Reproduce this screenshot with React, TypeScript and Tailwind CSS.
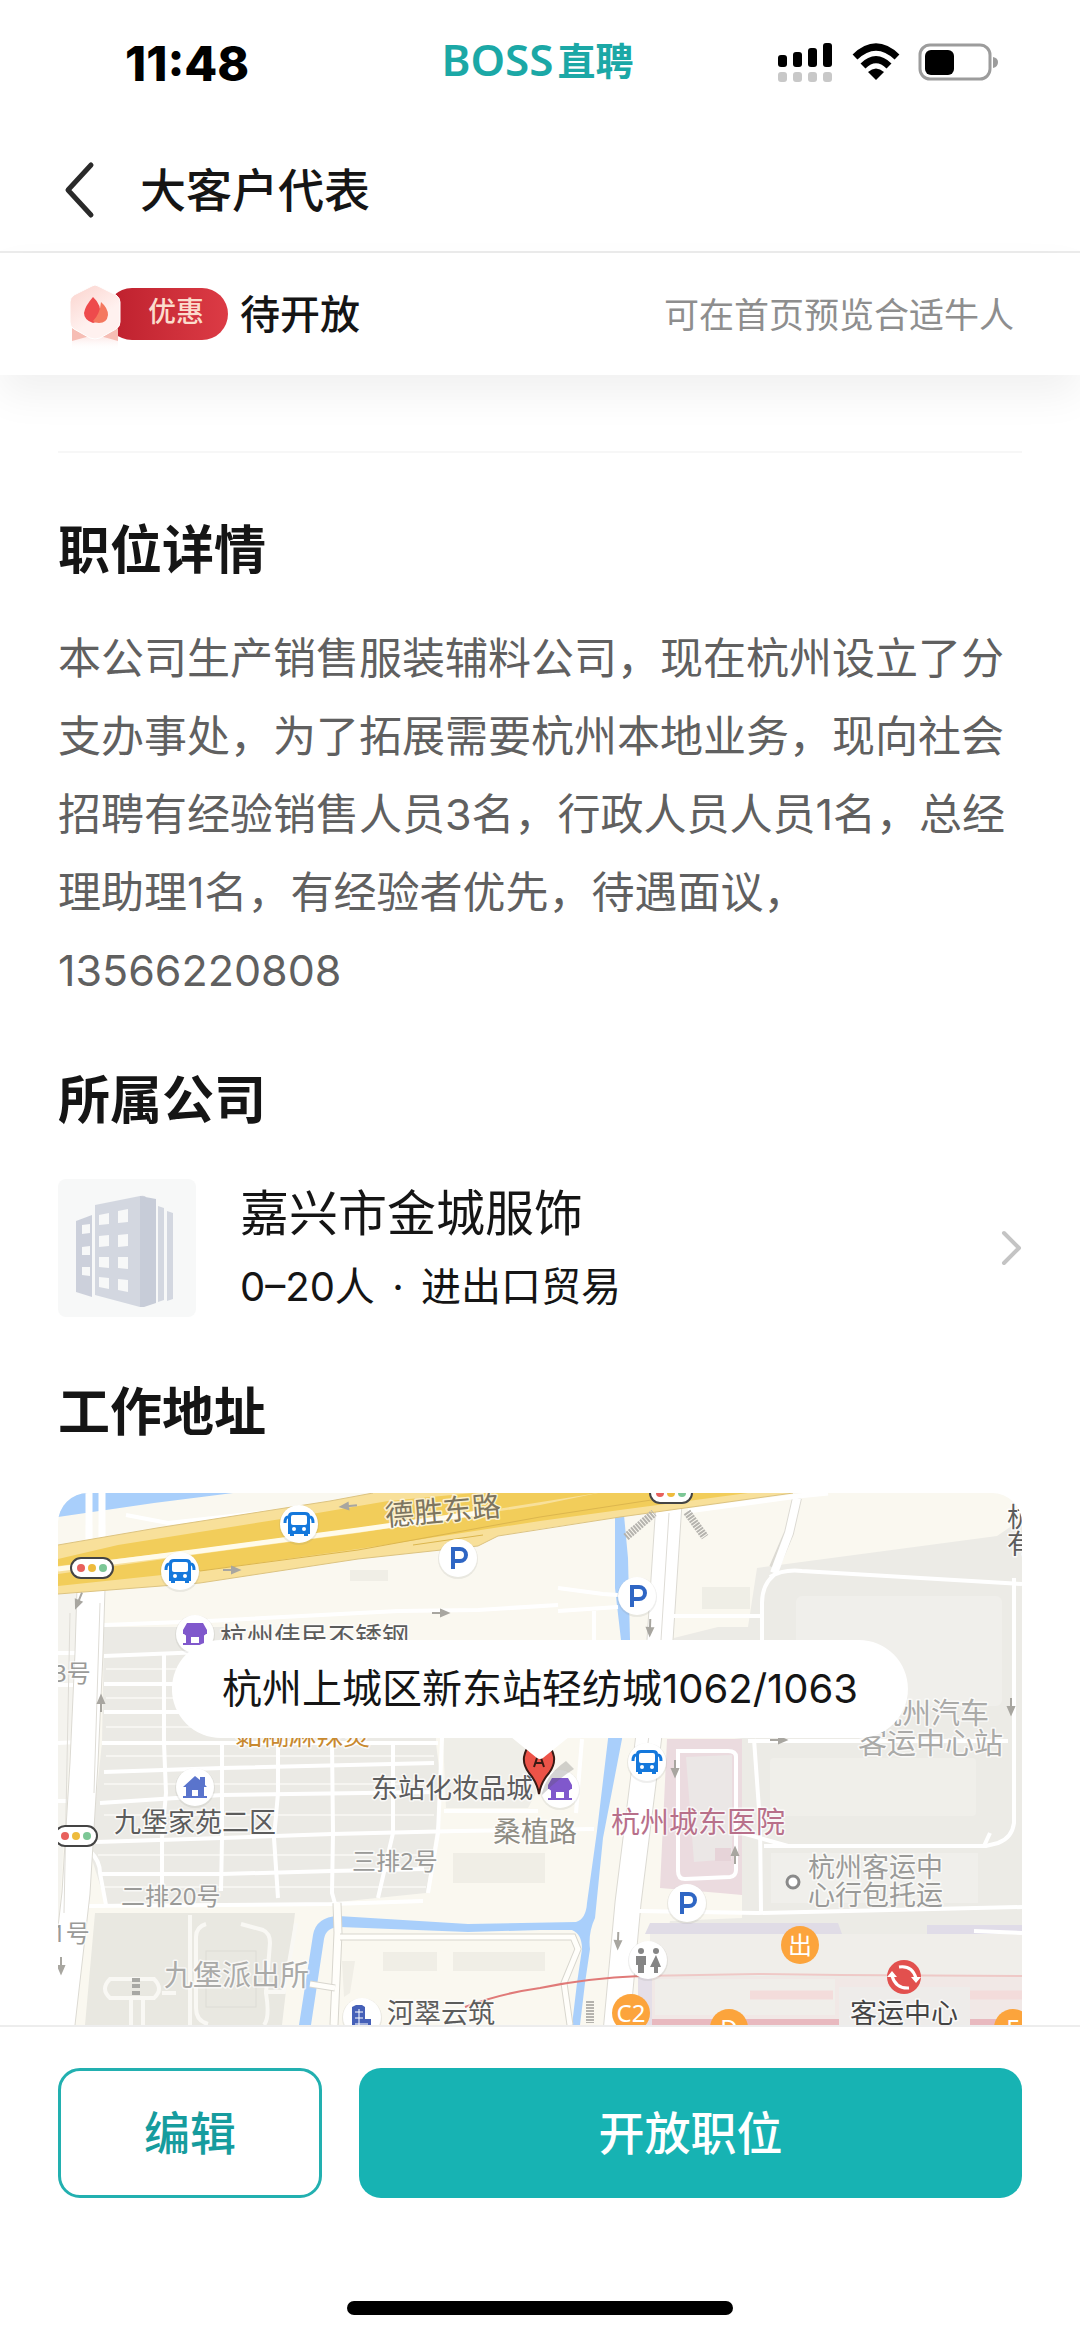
import type { ReactNode } from "react";

const LABEL = "fill-[#5c5c5c]";
const MUTED = "fill-[#9a9a98]";
const FAINT = "fill-[#aaaaa8]";

const mapLabels = [
  { text: "杭州伟民不锈钢", x: 162, y: 154, size: 27, color: LABEL },
  { text: "黏糊麻辣烫", x: 177, y: 252, size: 27, color: "fill-[#c8892f]" },
  { text: "3号", x: -5, y: 189, size: 24, color: MUTED },
  { text: "1号", x: -6, y: 449, size: 24, color: MUTED },
  { text: "九堡家苑二区", x: 56, y: 339, size: 27, color: LABEL },
  { text: "二排20号", x: 63, y: 412, size: 24, color: MUTED },
  { text: "三排2号", x: 294, y: 377, size: 24, color: MUTED },
  { text: "桑植路", x: 435, y: 349, size: 28, color: "fill-[#8f8d84]" },
  { text: "东站化妆品城", x: 313, y: 305, size: 27, color: LABEL },
  { text: "九堡派出所", x: 106, y: 493, size: 29, color: FAINT },
  { text: "河翠云筑", x: 329, y: 530, size: 27, color: LABEL },
  { text: "杭州城东医院", x: 553, y: 340, size: 29, color: "fill-[#b8708a]" },
  { text: "杭州汽车", x: 815, y: 231, size: 29, color: FAINT },
  { text: "客运中心站", x: 800, y: 261, size: 29, color: FAINT },
  { text: "杭州客运中", x: 750, y: 384, size: 27, color: MUTED },
  { text: "心行包托运", x: 750, y: 412, size: 27, color: MUTED },
  { text: "杭", x: 949, y: 34, size: 27, color: LABEL },
  { text: "有", x: 949, y: 61, size: 27, color: LABEL },
  { text: "客运中心", x: 792, y: 530, size: 27, color: "fill-[#444]" },
];

const arrows = [
  { x: 291, y: 13, r: 174 },
  { x: 173, y: 77, r: 0 },
  { x: 21, y: 107, r: 112 },
  { x: 382, y: 120, r: 0 },
  { x: 43, y: 211, r: -90 },
  { x: 592, y: 134, r: 92 },
  { x: 953, y: 213, r: 90 },
  { x: 720, y: 247, r: 0 },
  { x: 617, y: 275, r: 90 },
  { x: 677, y: 363, r: -90 },
  { x: 560, y: 447, r: 92 },
  { x: 3, y: 472, r: 90 },
];

const Disc = ({ x, y, children }: { x: number; y: number; children: ReactNode }) => (
  <g transform={`translate(${x} ${y})`}>
    <circle cy="1" r="20" fill="#8a8a80" opacity="0.14" />
    <circle r="19" fill="#fff" />
    {children}
  </g>
);

const Bus = ({ x, y }: { x: number; y: number }) => (
  <Disc x={x} y={y}>
    <path
      d="M-11-8Q-11-12-6-12H6Q11-12 11-8V10H9V12H5V10H-5V12H-9V10H-11Z"
      fill="#1478dc"
    />
    <path d="M-11-7Q-14-7-14-1M11-7Q14-7 14-1" stroke="#1478dc" strokeWidth="3" fill="none" />
    <rect x="-8" y="-9" width="16" height="10" rx="2" fill="#fff" />
    <circle cx="-5" cy="5" r="2" fill="#fff" />
    <circle cx="5" cy="5" r="2" fill="#fff" />
  </Disc>
);

const Parking = ({ x, y }: { x: number; y: number }) => (
  <Disc x={x} y={y}>
    <path d="M-5 11V-9H2a6 6 0 0 1 0 12H-5" fill="none" stroke="#2f66c4" strokeWidth="4" />
  </Disc>
);

const Shop = ({ x, y }: { x: number; y: number }) => (
  <Disc x={x} y={y}>
    <path
      d="M-8-11H8L12-4V0H9V9H12V11H-12V9H-9V0H-12V-4ZM-4 3V9H4V3Z"
      fill="#8058cc"
      fillRule="evenodd"
    />
    <path d="M-11 0q3 3 6 0q3 3 5 0q3 3 5 0q3 3 6 0" fill="#8058cc" />
  </Disc>
);

const TrafficLight = ({ x, y }: { x: number; y: number }) => (
  <g transform={`translate(${x} ${y})`}>
    <rect x="-21" y="-10" width="42" height="20" rx="10" fill="#fff" stroke="#444" strokeWidth="2" />
    <circle cx="-11" r="4" fill="#e8605c" />
    <circle r="4" fill="#eebb3c" />
    <circle cx="11" r="4" fill="#7cc796" />
  </g>
);

const Exit = ({ x, y, name }: { x: number; y: number; name: string }) => (
  <g transform={`translate(${x} ${y})`}>
    <circle r="19" fill="#fca43c" />
    <text y="9" textAnchor="middle" fontSize="24" fill="#fff">
      {name}
    </text>
  </g>
);

const AreaMap = () => (
  <svg
    viewBox="0 0 964 532"
    preserveAspectRatio="xMidYMin slice"
    className="block h-full w-full font-['Noto_Sans','Noto_Sans_CJK_SC',sans-serif]"
    role="img"
    aria-label="工作地址地图"
  >
    <rect width="964" height="532" fill="#faf8f0" />
    <path d="M0 0H175L96 10L0 24Z" fill="#a9cffb" />
    <path d="M0 101H26L12 250L0 440Z" fill="#f4f3ee" />

    {/* station side */}
    <path d="M699 75L939 43L964 26V532H590L612 428L684 425V246L600 235L616 145L660 134H690Z" fill="#ecebe6" />
    <rect x="644" y="94" width="48" height="22" fill="#efeee6" />
    <rect x="738" y="103" width="206" height="110" rx="6" fill="#f0efeb" />
    <rect x="712" y="265" width="206" height="58" rx="4" fill="#f0efea" />
    <rect x="713" y="360" width="207" height="50" fill="#f0efeb" />
    <path d="M587 441L592 430H780L784 441Z" fill="#e0dce6" />
    <rect x="869" y="432" width="95" height="9" fill="#e0dce8" />
    <rect x="592" y="441" width="372" height="42" fill="#f0eeea" />
    <rect x="585" y="484" width="379" height="48" fill="#f1e8e6" />
    <rect x="597" y="486" width="180" height="36" fill="#f0eeea" />
    <rect x="580" y="484" width="14" height="48" fill="#e5dfe8" />
    <rect x="594" y="526" width="370" height="8" fill="#e8b9bf" />
    <rect x="781" y="494" width="131" height="38" fill="#eeecea" />
    <path d="M692 502H775M912 502H964" stroke="#f3dcdb" strokeWidth="9" />
    <path d="M582 483L700 481L782 482L964 483" stroke="#efc8c6" strokeWidth="2" fill="none" />

    {/* hospital */}
    <path d="M609 246H684V402L662 400L602 395Z" fill="#ebdbdf" />
    <path d="M628 264L674 262V366L636 369Z" fill="#ebe7e6" />
    <rect x="657" y="355" width="16" height="13" fill="#e6d3d8" />
    <path d="M620 258V378Q620 386 627 386L672 384Q678 383 678 377V264Q678 258 670 258Z" fill="none" stroke="#fff" strokeWidth="4" />

    {/* residential blocks */}
    <path d="M46 134H170V147H380L378 250L384 300L368 400L270 410L48 411L32 360L44 250Z" fill="#ebeae5" />
    <path d="M385 245L480 245L478 300L470 315H388Z" fill="#efeee8" />
    <g fill="none" stroke="#f6f5f1" strokeWidth="2">
      <path d="M48 176H376M48 205H376M48 234H376M48 263H376M46 291H376M46 322H376M40 362H372M46 394H368" />
    </g>
    <g fill="none" stroke="#fff" strokeWidth="4">
      <path d="M46 132L150 128L340 118L420 117L500 112" />
      <path d="M46 163L170 158M46 191H378M46 219H378M44 250H380" />
      <path d="M0 160H30M0 192H20M0 250L20 249M0 308H18" />
      <path d="M46 279L164 275L376 270M42 310L164 302L380 299M38 349L164 345L274 341L400 338L536 336" />
      <path d="M44 381H164L274 378L366 376M30 413L164 412L274 411L365 408" />
      <path d="M106 160V250L108 300L104 345V400M164 250V345L163 398M220 250V300L216 345L220 405M274 250L275 340L274 400L281 425" />
      <path d="M335 250V340L320 405M384 245L380 340L370 400M386 318H480M32 358Q42 368 42 380L48 412" />
    </g>
    <path d="M37 420H237L224 532H27Z" fill="#e9e8e1" />
    <rect x="148" y="458" width="50" height="56" fill="none" stroke="#dddcd6" />
    <g fill="none" stroke="#f9f8f4" strokeWidth="4">
      <path d="M148 431Q138 434 138 444V515Q138 528 150 531M183 431L205 437Q212 440 212 450L208 500Q212 525 206 532M206 499H226L238 430" />
      <path d="M52 486H96Q106 496 96 505H52Q42 496 52 486ZM73 505V532M85 505V532M104 500H118M132 422V532" />
    </g>
    <path d="M74 487H82M74 493H82M74 500H82" stroke="#a8a8a4" strokeWidth="4" />
    <g fill="#f0eee6">
      <rect x="395" y="360" width="92" height="30" />
      <rect x="325" y="459" width="54" height="19" />
      <rect x="395" y="459" width="92" height="19" />
      <path d="M284 468H297L292 500L286 504Z" />
      <rect x="292" y="77" width="38" height="11" />
    </g>

    {/* river */}
    <path
      d="M557 22L566 22L570 65L572 147L564 246L545 345L537 425Q530 440 532 456L527 490L522 532H514L519 490L524 456Q524 441 514 437H482L410 439L282 434Q268 434 266 446L253 532H241L255 442Q258 424 280 423L410 431L518 429Q528 426 529 410L539 338L550 246L563 147L557 95Z"
      fill="#a9cffb"
    />
    <path d="M279 410L280 440L276 532" fill="none" stroke="#d8d6ce" strokeWidth="9" />
    <path d="M279 410L280 440L276 532" fill="none" stroke="#fffefa" strokeWidth="7" />
    <path d="M282 444H515L520 456L506 490L512 532M252 491L277 495" fill="none" stroke="#d8d6ce" strokeWidth="7" />
    <path d="M282 444H515L520 456L506 490L512 532M252 491L277 495" fill="none" stroke="#fffefa" strokeWidth="5" />

    {/* white roads */}
    <g fill="none" stroke="#dcdad3">
      <path d="M611 10L602 147L590 250L570 410L558 540" strokeWidth="27" />
      <path d="M33 95L31 160L26 270L18 400L2 540" strokeWidth="29" />
      <path d="M739 5L731 40L716 75" strokeWidth="10" />
    </g>
    <g fill="none" stroke="#fff">
      <path d="M611 10L602 147L590 250L570 410L558 540" strokeWidth="25" />
      <path d="M33 95L31 160L26 270L18 400L2 540" strokeWidth="27" />
      <path d="M739 5L731 40L716 80" strokeWidth="8" />
      <path d="M31 0V62M44 0V60" strokeWidth="7" />
      <path d="M630 18L740 3L770 0" strokeWidth="5" />
    </g>
    <path d="M611 20L603 147L590 250M42 110L36 300M12 120L6 420" fill="none" stroke="#dedcd6" />
    <g fill="none" stroke="#fff" strokeWidth="4">
      <path d="M712 84Q725 76 744 78L964 91M716 82Q704 92 704 110V147M956 85V330Q954 345 940 350L928 353H730L684 340" />
      <path d="M614 123H704M500 95L545 101L560 102M500 118L560 114M536 118V147M696 246L702 330L703 418" />
      <path d="M690 248H950M706 353H926L932 340M580 418L700 420L964 414M916 438L964 440" />
      <path d="M524 246L518 320M68 22L110 30L200 20L300 10" />
    </g>

    {/* expressway */}
    <path d="M0 52L99 35L272 8L315 0H735L562 24L482 36L440 43L420 53L300 66L142 90L0 101Z" fill="#f8e09a" />
    <path d="M0 52L99 35L272 8L315 0M0 101L142 90L300 66L420 53L440 43L562 24L735 0" fill="none" stroke="#dcc381" />
    <path d="M0 66L60 52L242 23L330 8L415 0H540L420 19L300 35L142 56L0 73Z" fill="#f2cd5a" />
    <path d="M0 81L142 61L300 40L482 12L540 0H690L562 17L482 28L300 56L142 78L0 93Z" fill="#f2cd5a" />
    <path d="M0 76L142 58L300 37L420 20" fill="none" stroke="#fffbea" strokeWidth="5" />
    <path d="M142 78L300 57L482 24L600 6M355 52L425 42" fill="none" stroke="#dcb64e" />

    <path d="M568 44L596 20M629 19L647 44" fill="none" stroke="#b5b3ae" strokeWidth="8" strokeDasharray="2 1" />
    <path d="M532 508V530" stroke="#b5b3ae" strokeWidth="8" strokeDasharray="2 1" />
    <path d="M407 514Q440 501 482 495Q530 485 582 483" fill="none" stroke="#e07a78" strokeWidth="2" />

    {arrows.map(({ x, y, r }) => (
      <path
        key={`${x}-${y}`}
        transform={`translate(${x} ${y}) rotate(${r})`}
        d="M-8 0H2M1-3L8 0L1 3Z"
        stroke="#a8a6a0"
        strokeWidth="2"
        fill="#a8a6a0"
      />
    ))}

    <g stroke="#fff" strokeWidth="3" paintOrder="stroke" strokeLinejoin="round" strokeOpacity="0.7">
      <text transform="translate(328 33) rotate(-5)" fontSize="29" className="fill-[#7d755f]">
        德胜东路
      </text>
      {mapLabels.map(({ text, x, y, size, color }) => (
        <text key={text} x={x} y={y} fontSize={size} className={color}>
          {text}
        </text>
      ))}
    </g>
    <circle cx="735" cy="389" r="6" fill="#fff" stroke="#8a8a8a" strokeWidth="3" />

    <Bus x={241} y={31} />
    <Bus x={122} y={78} />
    <Bus x={589} y={269} />
    <Parking x={400} y={65} />
    <Parking x={579} y={103} />
    <Parking x={629} y={410} />
    <Shop x={137} y={141} />
    <Disc x={137} y={294}>
      <path d="M-12 0L0-11L5-7V-10H10V-2L12 0H9V9H12V11H-12V9H-9V0ZM-3 3V9H3V3Z" fill="#5a74cc" fillRule="evenodd" />
    </Disc>
    <Disc x={304} y={524}>
      <path d="M-10 12V-10L-6-12H0L3-10V2H9V12Z" fill="#4560b8" />
      <path d="M-7-5H1M-7 1H1M-7 7H6M-3-8V12" stroke="#fff" strokeWidth="1" />
    </Disc>
    <Disc x={590} y={467}>
      <g fill="#858585">
        <circle cx="-7" cy="-9" r="3" />
        <path d="M-12-4H-2V5H-4V13H-10V5H-12Z" />
        <circle cx="8" cy="-9" r="3" />
        <path d="M8-5L13 7H10V13H6V7H2Z" />
      </g>
    </Disc>
    <TrafficLight x={34} y={75} />
    <TrafficLight x={613} y={0} />
    <TrafficLight x={18} y={343} />
    <Exit x={742} y={452} name="出" />
    <Exit x={573} y={520} name="C2" />
    <Exit x={671} y={535} name="D" />
    <Exit x={955} y={535} name="E" />
    <g transform="translate(846 484)">
      <circle r="17" fill="#e2504e" />
      <path d="M-5-10Q8-12 12 1M5 11Q-8 12-12-1" fill="none" stroke="#fff" strokeWidth="3" />
      <path d="M7 0H17L12 6ZM-7 0H-17L-12-6Z" fill="#fff" />
    </g>
    <Shop x={502} y={296} />
    <path d="M484 300Q488 282 508 268L516 276Q500 286 484 302Z" fill="#555" opacity="0.25" />
    <path
      d="M481 301Q479 289 471 280Q465 272 466 264Q469 249 481 249Q493 249 496 264Q497 272 491 280Q483 289 481 301Z"
      fill="#ec5348"
      stroke="#3a1a14"
      strokeWidth="2"
    />
    <path d="M476 274L480 262H482L486 274M477 270H485" stroke="#3a1a14" strokeWidth="2" fill="none" />
  </svg>
);

const StatusBar = () => (
  <div className="grid h-[126px] grid-cols-[1fr_auto_1fr] items-center pl-[125px] pr-[82px]">
    <span className="pt-0.5 text-[48px] font-extrabold leading-none text-black">11:48</span>
    <div className="-ml-12 flex items-center gap-1 pb-2 font-['Noto_Sans_CJK_SC',sans-serif] font-bold leading-none text-[#1ba8a6]">
      <span className="font-['Noto_Sans','Noto_Sans_CJK_SC',sans-serif] text-[44px] font-semibold">BOSS</span>
      <span className="text-[38px]">直聘</span>
    </div>
    <svg viewBox="0 0 222 42" className="h-[42px] w-[222px] justify-self-end">
      <rect x="2" y="13" width="9" height="12" rx="3" />
      <rect x="17" y="10" width="9" height="15" rx="3" />
      <rect x="32" y="6" width="9" height="19" rx="3" />
      <rect x="47" y="1" width="9" height="24" rx="3" />
      <g fill="#c8c8c8">
        <rect x="2" y="30" width="9" height="10" rx="3" />
        <rect x="17" y="30" width="9" height="10" rx="3" />
        <rect x="32" y="30" width="9" height="10" rx="3" />
        <rect x="47" y="30" width="9" height="10" rx="3" />
      </g>
      <g transform="translate(100 0)" fill="none" stroke="#000" strokeWidth="7">
        <path d="M-21 15Q0-5 21 15" />
        <path d="M-13 24Q0 11 13 24" />
        <path d="M0 38L-8 30Q0 23 8 30Z" fill="#000" stroke="none" />
      </g>
      <rect x="144" y="3" width="70" height="34" rx="10" fill="none" stroke="#9c9c9c" strokeWidth="3" />
      <rect x="149" y="8" width="29" height="25" rx="6" />
      <path d="M217 15Q222 16 222 20Q222 25 217 26Z" fill="#9c9c9c" />
    </svg>
  </div>
);

const DiscountBadge = () => (
  <div className="flex items-start pt-1.5">
    <svg viewBox="0 0 60 66" className="relative h-[66px] w-[60px]">
      <defs>
        <linearGradient id="medal" x1="0" y1="0" x2="0.6" y2="1">
          <stop offset="0" stopColor="#fbd3cd" />
          <stop offset="0.7" stopColor="#fff1ef" />
        </linearGradient>
        <linearGradient id="ribbonGlow" x1="0" y1="0" x2="0" y2="1">
          <stop offset="0" stopColor="#fbd9d6" />
          <stop offset="1" stopColor="#fff" stopOpacity="0" />
        </linearGradient>
      </defs>
      <rect x="6" y="48" width="46" height="17" fill="url(#ribbonGlow)" />
      <path d="M6 43L24 51L6 56ZM52 43L34 51L52 56Z" fill="#f6bdb4" />
      <path
        d="M26 1Q29-1 32 1L50 10Q54 13 54 17V37Q54 42 50 44L34 53Q29 55 24 53L8 44Q4 42 4 37V17Q4 13 8 10Z"
        fill="url(#medal)"
        stroke="#fff"
      />
      <path d="M27 12Q36 20 34 31Q32 37 27 38Q18 35 18 28Q19 21 27 12Z" fill="#ee4a4c" />
      <path d="M35 17Q42 23 42 30Q41 38 33 38Q29 38 27 36Q34 29 35 17Z" fill="#f4785f" />
    </svg>
    <span className="-ml-5 mt-[3px] flex h-[52px] w-[122px] items-center justify-end rounded-full bg-linear-to-r from-[#bd1f2d] to-[#dc3b45] pb-1 pr-6 text-[28px] font-medium text-[#fbdccc]">
      优惠
    </span>
  </div>
);

const CompanyTile = () => (
  <svg viewBox="0 0 138 138" className="size-[138px] shrink-0 rounded-lg bg-[#f7f8f8]">
    <path d="M18 42L34 36V118L18 113Z" fill="#ccd0db" />
    <path d="M37 26L82 17Q88 16 88 19V126L82 128L37 116Z" fill="#d3d7e0" />
    <path d="M82 17L98 20V124L86 128H82Z" fill="#c7ccd8" />
    <path d="M100 27L106 29V121L100 123ZM109 32L115 34V120L109 122Z" fill="#d3d7e0" />
    <g fill="#f7f8f8">
      <path d="M24 46L32 45V54L24 55ZM24 68L32 67V76L24 76ZM24 88H32V97L24 96Z" />
      <path d="M41 36L51 34V45L41 46ZM41 57L51 56V67L41 68ZM41 78H51V89L41 88ZM41 98L51 99V110L41 108Z" />
      <path d="M60 32L70 30V43L60 44ZM60 56L70 55V67L60 68ZM60 78H70V90L60 89ZM60 100L70 101V113L60 111Z" />
    </g>
  </svg>
);

const SectionTitle = ({ className, children }: { className: string; children: ReactNode }) => (
  <h2 className={`text-[52px] font-bold leading-[72px] text-[#151515] ${className}`}>{children}</h2>
);

const App = () => {
  return (
    <div className="flex min-h-screen w-full flex-col bg-white font-['Inter','Noto_Sans_CJK_SC',sans-serif] text-[#151515]">
      <StatusBar />

      <header className="flex h-[127px] items-center gap-11 border-b-2 border-[#ececec] pl-[62px] pt-0.5">
        <button type="button" aria-label="返回">
          <svg viewBox="0 0 34 58" className="h-[58px] w-[34px]" fill="none" stroke="#2a2a2a" strokeWidth="5" strokeLinecap="round" strokeLinejoin="round">
            <path d="M29 4L6 29L29 54" />
          </svg>
        </button>
        <h1 className="text-[46px] font-medium leading-none">大客户代表</h1>
      </header>

      <div className="flex h-[122px] items-center justify-between bg-white px-[66px] pt-0.5 shadow-[0_20px_40px_rgba(0,0,0,0.06)]">
        <div className="flex items-center gap-3">
          <DiscountBadge />
          <span className="text-[40px] font-medium leading-none">待开放</span>
        </div>
        <span className="text-[35px] leading-none text-[#8e8e8e]">可在首页预览合适牛人</span>
      </div>

      <main className="px-[58px]">
        <hr className="mt-[76px] border-t-2 border-[#f7f7f7]" />

        <SectionTitle className="mt-[62px]">职位详情</SectionTitle>
        <p className="mt-8 text-[43px] leading-[78px] text-[#606060]">
          本公司生产销售服装辅料公司，现在杭州设立了分支办事处，为了拓展需要杭州本地业务，现向社会招聘有经验销售人员3名，行政人员人员1名，总经理助理1名，有经验者优先，待遇面议，13566220808
        </p>

        <SectionTitle className="mt-14">所属公司</SectionTitle>
        <a href="#company" className="mt-[42px] flex items-center gap-11">
          <CompanyTile />
          <div className="flex flex-1 flex-col gap-3 pt-1">
            <div className="text-[49px] leading-[62px]">嘉兴市金城服饰</div>
            <div className="text-[40px] leading-[60px]">
              0–20人 <span className="mx-1.5">·</span> 进出口贸易
            </div>
          </div>
          <svg viewBox="0 0 22 36" className="h-9 w-[22px]" fill="none" stroke="#c4c4c4" strokeWidth="4" strokeLinecap="round" strokeLinejoin="round">
            <path d="M4 3L19 18L4 33" />
          </svg>
        </a>

        <SectionTitle className="mt-15">工作地址</SectionTitle>
        <div className="relative mt-11 h-[532px] overflow-hidden rounded-t-[30px]">
          <AreaMap />
          <div className="absolute left-1/2 top-[147px] -translate-x-1/2">
            <div className="flex h-[98px] items-center whitespace-nowrap rounded-full bg-white px-[50px] text-[40px]">
              杭州上城区新东站轻纺城1062/1063
            </div>
            <svg viewBox="0 0 58 24" className="mx-auto -mt-px h-6 w-[58px]" fill="#fff">
              <path d="M0 0H58L32 21Q29 23 26 21Z" />
            </svg>
          </div>
        </div>
      </main>

      <footer className="border-t-2 border-[#ededed] bg-white">
        <div className="flex gap-[37px] px-[58px] pt-[41px]">
          <button type="button" className="h-[130px] w-[264px] rounded-[22px] border-3 border-[#22b0b0] text-[46px] font-medium text-[#169c9e]">
            编辑
          </button>
          <button type="button" className="h-[130px] flex-1 rounded-[22px] bg-[#17b3b3] text-[46px] font-medium text-white">
            开放职位
          </button>
        </div>
        <div className="mx-auto mb-6 mt-[103px] h-[14px] w-[386px] rounded-full bg-black" />
      </footer>
    </div>
  );
};

export default App;
